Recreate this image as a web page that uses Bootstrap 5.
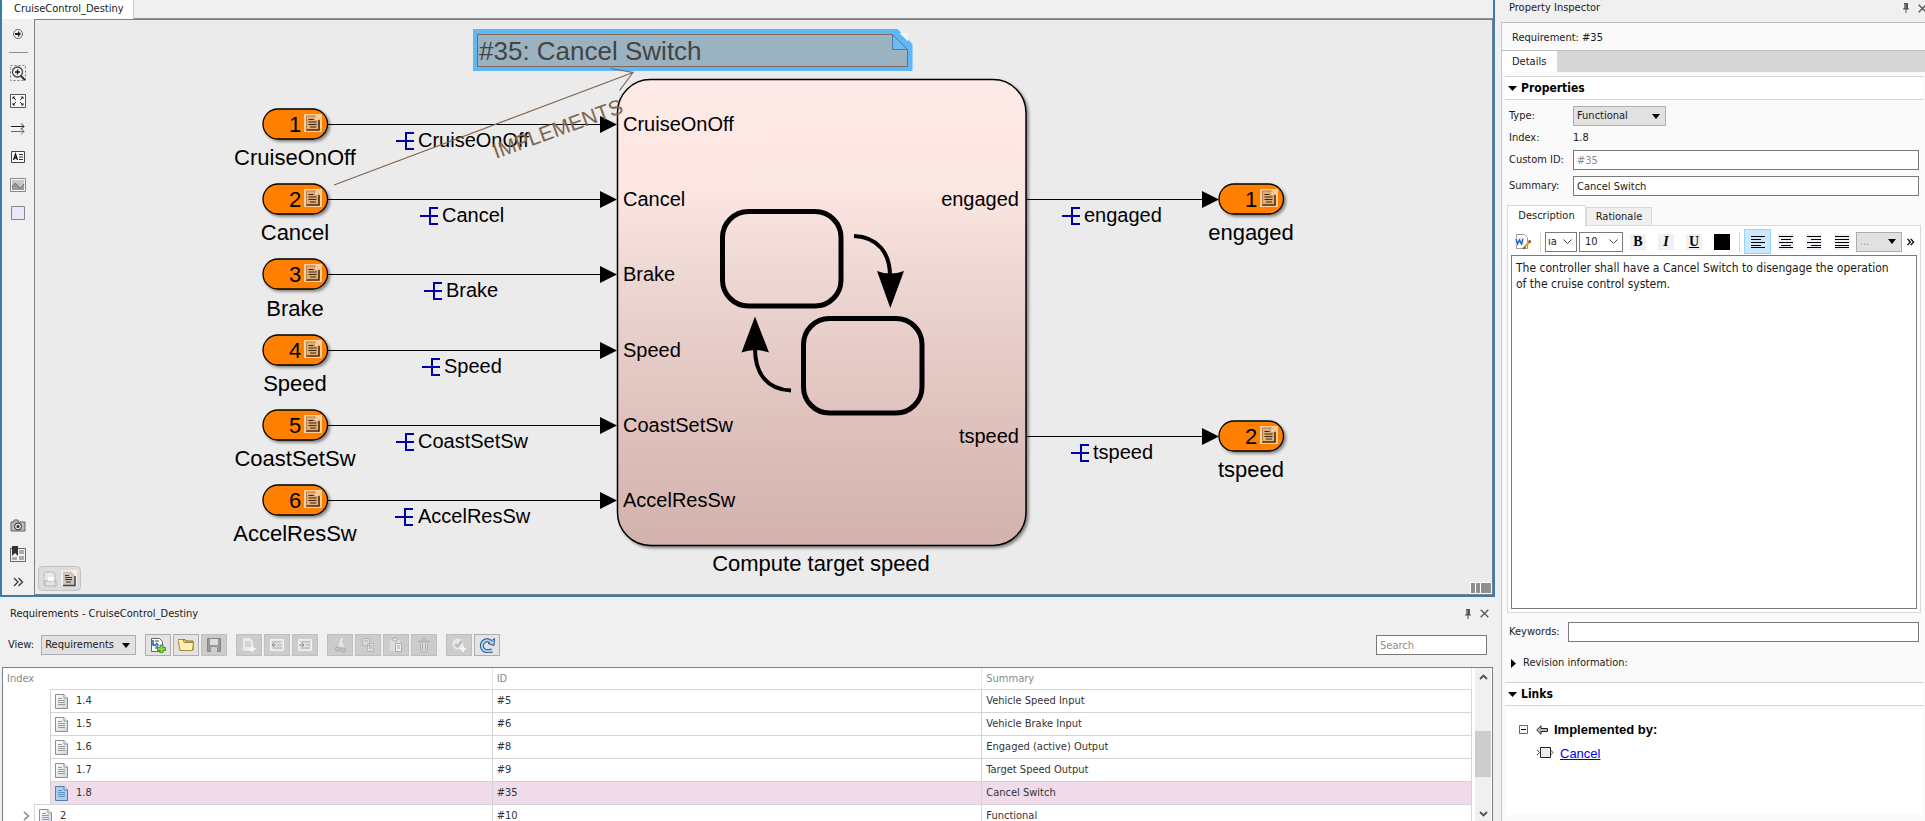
<!DOCTYPE html>
<html lang="en">
<head>
<meta charset="utf-8">
<meta name="viewport" content="width=device-width, initial-scale=1">
<title>CruiseControl_Destiny</title>
<link href="https://cdn.jsdelivr.net/npm/bootstrap@5.3.0/dist/css/bootstrap.min.css" rel="stylesheet">
<style>
  body { font: 11px/16px "DejaVu Sans Condensed", "Noto Sans", sans-serif; color: #1a1a1a; background: #f0f0f0; }
  svg { display: block; flex: none; }
  .app { height: 100vh; min-height: 600px; }
  .workspace { min-width: 0; margin-right: 6px; }

  /* model editor */
  .editor { border: 2px solid #3a7cb0; border-top: 0; min-height: 0; }
  .editor-body { min-height: 0; }
  .doc-tabs { height: 19px; }
  .doc-tab { background: #fff; border-right: 1px solid #ccc; width: 132px; padding: 0 0 1px 12px; color: #1a1a1a; text-decoration: none; }
  .doc-rest { border-bottom: 1px solid #8d8f94; }
  .palette { width: 32px; padding: 7px 0 5px; gap: 12px; }
  .palette .btn, .flat { padding: 0; border: 0; border-radius: 0; line-height: 1; }
  .palette hr { width: 19px; margin: 0; color: #8f8f8f; opacity: 1; }
  .palette .first-tool { gap: 10px; }
  .canvas { background: #ebebeb; border: 1px solid #7c8087; min-width: 0; }
  .canvas svg { width: 100%; height: 100%; font-family: "Liberation Sans", Arial, sans-serif; }

  /* requirements browser */
  .dock { height: 224px; flex: none; }
  .dock-title { height: 32px; flex: none; padding: 1px 6px 0 10px; }
  .dock-tools { height: 32px; flex: none; padding: 0 8px; gap: 9px; }
  .view-pick { gap: 7px; }
  .tool-group { gap: 2px; }
  .tool { width: 26px; height: 22px; padding: 0; border: 1px solid #adadad; border-radius: 0; background: #e3e3e3; display: flex; align-items: center; justify-content: center; }
  .tool:disabled { background: #cccccc; border-color: #bfbfbf; opacity: 1; }
  .pick { height: 20px; padding: 0 20px 0 3px; border: 1px solid #adadad; border-radius: 0; font-size: 11px; line-height: 18px; color: #1a1a1a; background: #e1e1e1 url("data:image/svg+xml,%3Csvg xmlns='http://www.w3.org/2000/svg' viewBox='0 0 8 5'%3E%3Cpath d='M0 0h8L4 5z'/%3E%3C/svg%3E") no-repeat right 5px center / 8px 5px; }
  .pick-view { width: 95px; }
  .pick-type { width: 93px; }
  .pick-gray { width: 46px; color: #999; margin-left: 6px; }
  .pick-open { background: #fff url("data:image/svg+xml,%3Csvg xmlns='http://www.w3.org/2000/svg' viewBox='0 0 9 6'%3E%3Cpath d='M.5 .5l4 4 4-4' fill='none' stroke='%23444'/%3E%3C/svg%3E") no-repeat right 4px center / 9px 6px; border-color: #7a7a7a; padding-left: 2px; padding-right: 12px; }
  .pick-font { width: 32px; }
  .pick-size { width: 44px; padding-left: 5px; margin-left: 2px; }
  .field { height: 20px; border: 1px solid #7a7a7a; border-radius: 0; padding: 0 3px; font-size: 11px; line-height: 18px; color: #1a1a1a; }
  .field::placeholder { color: #8c8c8c; }
  .field-search { width: 111px; }

  .grid-frame { flex: 1 1 0; border: 1px solid #7c8087; border-bottom: 0; margin: 6px 2px 0; background: #fff; min-height: 0; }
  .req-table { table-layout: fixed; width: 100%; border-collapse: separate; border-spacing: 0; color: #333; }
  .req-table th { font-weight: normal; color: #8a8a8a; height: 21px; padding: 0 4px; border-right: 1px solid #e6e6e6; }
  .req-table td { height: 23px; padding: 0 4px; border-top: 1px solid #d4d4d4; border-right: 1px solid #d4d4d4; }
  .req-table td.tree { padding: 0; border-top: 0; }
  .leaf { height: 23px; margin-left: 47px; border: solid #d4d4d4; border-width: 1px 0 0 1px; padding-left: 4px; gap: 8px; }
  .branch { margin-left: 0; }
  .twisty { width: 31px; padding-left: 20px; }
  .picked td:not(.tree), .picked .leaf { background: #efdbea; }
  .scroller { width: 20px; flex: none; padding: 0 1px 0 3px; }
  .track { background: #f0f0f0; padding: 6px 0 4px; }
  .thumb { height: 46px; margin-top: 51px; background: #cdcdcd; }

  /* property inspector */
  .inspector { width: 424px; flex: none; }
  .inspector-title { height: 22px; padding: 0 0 6px 8px; }
  .inspector-body { background: #fafafa; border-left: 1px solid #c8c8c8; min-height: 0; }
  .subject { height: 29px; border: solid #bdbdbd; border-width: 1px 0; padding: 2px 0 0 10px; }
  .detail-tabs { height: 21px; background: #d6d6d6; }
  .detail-tab { background: #fff; width: 55px; padding: 3px 0 0 10px; color: #1a1a1a; text-decoration: none; }
  .section-head { height: 24px; flex: none; margin: 0 1px 0 3px; border: solid #d4d4d4; border-width: 1px 0; background: #fff; padding-left: 3px; gap: 4px; font-size: 12px; font-weight: bold; color: #000; }
  .props { padding: 6px 6px 8px 7px; }
  .props .line { height: 20px; }
  .props .line + .line { margin-top: 2px; }
  .props .line + .line.spaced { margin-top: 6px; }
  .props .line label, .props .cap { width: 64px; }
  .extras { padding: 9px 6px 11px 7px; }
  .extras .revision { padding: 13px 0 0 2px; gap: 7px; }
  .text-tabs { padding-left: 5px; height: 21px; }
  .text-tab { padding: 0; border: 1px solid #d9d9d9; border-bottom: 0; border-radius: 0; background: #f0f0f0; font-size: 11px; line-height: 16px; width: 66px; height: 18px; color: #1a1a1a; }
  .text-tab.open { width: 79px; height: 21px; background: #fff; position: relative; z-index: 1; margin-bottom: -1px; }
  .pane { margin: 0 4px 0 5px; border: 1px solid #d9d9d9; background: #fff; padding: 2px 3px 3px; min-height: 0; }
  .format { height: 27px; padding-left: 4px; }
  .glyph { width: 16px; height: 16px; padding: 0; border: 0; border-radius: 0; background: #f0f0f7; margin-left: 12px; color: #000; font: bold 14px/16px "Liberation Serif", serif; }
  .glyph-on { width: 27px; height: 25px; background: #cce8ff; border: 1px solid #99d1ff; margin-left: 4px; display: flex; align-items: center; justify-content: center; }
  .glyph-on + .glyph, .pick-size + .glyph { margin-left: 7px; }
  .swatch { background: #000; }
  .rule { width: 1px; height: 20px; background: #d4d4d4; margin-left: 9px; }
  .prose { border: 1px solid #7a7a7a; border-radius: 0; resize: none; font-size: 12px; line-height: 16px; padding: 4px 20px 4px 4px; color: #1a1a1a; min-height: 0; }
  .links { height: 105px; flex: none; margin: 4px 3px 6px 5px; background: #fff; padding: 12px 0 0 12px; font: 13px/16px "Liberation Sans", Arial, sans-serif; color: #000; }
  .links a { color: #0000ee; text-decoration: underline; }
  .link-kind { gap: 6px; }
  .link-item { padding-left: 18px; gap: 6px; }
</style>
</head>
<body class="overflow-hidden">

<svg width="0" height="0" class="position-absolute" aria-hidden="true">
  <defs>
    <linearGradient id="chartFill" x1="0" y1="0" x2="0" y2="1">
      <stop offset="0" stop-color="#fde9e6"/><stop offset=".22" stop-color="#fce7e4"/>
      <stop offset=".4" stop-color="#efd9d4"/><stop offset=".62" stop-color="#e4c9c5"/><stop offset="1" stop-color="#d3b1ac"/>
    </linearGradient>
    <linearGradient id="paper" x1="0" y1="0" x2="1" y2="1"><stop offset="0" stop-color="#fff"/><stop offset="1" stop-color="#cfd4da"/></linearGradient>
    <filter id="shade" x="-10%" y="-10%" width="125%" height="130%"><feDropShadow dx="2" dy="2" stdDeviation="1.5" flood-color="#000" flood-opacity=".45"/></filter>
    <symbol id="badge" viewBox="0 0 18 18">
      <path d="M0 0h18v18H0z" fill="#ffcf98"/>
      <path d="M2 1.500h9l4.500 4v11H2z" fill="#e0ae78"/>
      <path d="M2 16h13V6" fill="none" stroke="#4b2b12" stroke-width="1.600"/>
      <path d="M2.500 16V2H11" fill="none" stroke="#b98252"/>
      <path d="M11 1.500V6h4.500z" fill="#fff0df" stroke="#b98252" stroke-width=".6"/>
      <path d="M4.500 5.500h5M4.500 8h8M4.500 10.500h8M6 13h6" stroke="#3c2208" stroke-width="1.200"/>
    </symbol>
    <symbol id="port" viewBox="0 0 72 38" overflow="visible">
      <rect x="1" y="1" width="64.500" height="30" rx="15" fill="#ff8000" stroke="#000" stroke-width="1.300" filter="url(#shade)"/>
      <use href="#badge" x="42" y="6" width="18" height="18"/>
    </symbol>
    <symbol id="prong" viewBox="0 0 18 18"><path d="M0 9h18M18 1h-8v16h8" fill="none" stroke="#0000a8" stroke-width="2"/></symbol>
    <symbol id="page" viewBox="0 0 13 15"><path d="M.5.500h8.500l3.500 3.500v10.500H.5z" fill="url(#paper)" stroke="#8b8f93"/><path d="M9 .5V4h3.500" fill="#fff" stroke="#8b8f93"/><path d="M3 4.500h4M3 6.500h7M3 8.500h7M3 10.500h7" stroke="#8e9296" stroke-width=".9"/></symbol>
    <symbol id="pin" viewBox="0 0 8 12"><path d="M2 1h4v6H2z" fill="#555"/><path d="M3 2v4" stroke="#aaa"/><path d="M1 7h6" stroke="#555"/><path d="M4 7v4" stroke="#555"/></symbol>
    <symbol id="cross" viewBox="0 0 9 9"><path d="M.7.700l7.600 7.600M8.300.700L.7 8.300" stroke="#555" stroke-width="1.300"/></symbol>
    <symbol id="more" viewBox="0 0 9 10"><path d="M.8 1l3.500 4-3.500 4M4.800 1l3.500 4-3.500 4" fill="none" stroke="currentColor" stroke-width="1.600"/></symbol>
    <symbol id="open" viewBox="0 0 9 5"><path d="M0 0h9L4.500 5z"/></symbol>
  </defs>
</svg>

<div class="app d-flex">
  <main class="workspace d-flex flex-column flex-grow-1">

    <section class="editor d-flex flex-column flex-grow-1">
      <div class="doc-tabs d-flex">
        <a href="#" class="doc-tab d-flex align-items-center">CruiseControl_Destiny</a>
        <div class="doc-rest flex-grow-1"></div>
      </div>
      <div class="editor-body d-flex flex-grow-1">
        <nav class="palette d-flex flex-column align-items-center" aria-label="Palette">
          <div class="first-tool d-flex flex-column align-items-center">
            <button class="btn" aria-label="Hide browser"><svg width="16" height="16"><circle cx="8" cy="8" r="4.500" fill="#eee" stroke="#666"/><path d="M5 8h3" stroke="#222" stroke-width="2"/><path d="M8 5l3 3-3 3z" fill="#222"/></svg></button>
            <hr>
          </div>
          <button class="btn" aria-label="Zoom"><svg width="16" height="16"><path d="M.5.500h15v15H.5z" fill="none" stroke="#777" stroke-dasharray="2 2"/><circle cx="7.500" cy="7" r="5" fill="#f6f6f6" stroke="#444" stroke-width="1.300"/><path d="M5 7h5M7.500 4.500v5" stroke="#111" stroke-width="1.300"/><path d="M11 11l4 4" stroke="#333" stroke-width="2"/></svg></button>
          <button class="btn" aria-label="Fit to view"><svg width="16" height="16"><path d="M.5 1.500h15v13H.5z" fill="#fafafa" stroke="#555"/><path d="M3 6V4h2M3 4l3 3M13 6V4h-2M13 4l-3 3M3 10v2h2M3 12l3-3M13 10v2h-2M13 12l-3-3" fill="none" stroke="#222"/></svg></button>
          <button class="btn" aria-label="Sample time"><svg width="16" height="16"><path d="M1 5.500h13M11 2.500l3 3-3 3" fill="none" stroke="#222"/><path d="M1 10.500h13M11 7.500l3 3-3 3" fill="none" stroke="#666"/></svg></button>
          <button class="btn" aria-label="Annotation"><svg width="16" height="16"><path d="M1.500 2.500h13v11h-13z" fill="#fafafa" stroke="#444"/><path d="M3.500 11l2-6 2 6M4 9h3" fill="none" stroke="#111" stroke-width="1.300"/><path d="M9 5.500h4M9 8h4M9 10.500h4" stroke="#333"/></svg></button>
          <button class="btn" aria-label="Image"><svg width="16" height="16"><path d="M.5 1.500h15v13H.5z" fill="#f6f6f6" stroke="#888"/><path d="M2 3h12v10H2z" fill="#c6c6c6"/><path d="M2 10c3-5 4-4 6-1s3 2 6-2v6H2z" fill="#9a9a9a"/><path d="M2 10c3-5 4-4 6-1s3 2 6-2" fill="none" stroke="#666"/></svg></button>
          <button class="btn" aria-label="Area"><svg width="16" height="16"><path d="M1.500 1.500h13v13h-13z" fill="#e8e8fa" stroke="#888"/></svg></button>
          <div class="flex-grow-1"></div>
          <button class="btn" aria-label="Screenshot"><svg width="16" height="16"><path d="M1 4h3V2h4v2h7v9H1z" fill="#bbb" stroke="#666"/><circle cx="8" cy="8.500" r="3.500" fill="#ddd" stroke="#333"/><circle cx="8" cy="8.500" r="1.500" fill="#333"/></svg></button>
          <button class="btn" aria-label="Bookmarks"><svg width="16" height="16"><path d="M.5 2.500h15v13H.5z" fill="#f4f4f4" stroke="#666"/><path d="M2 0h6v10L5 7l-3 3z" fill="#333"/><path d="M9 4h5v4H9zM9 10h5v4H9zM2 11h5v3H2z" fill="#aaa"/></svg></button>
          <button class="btn" aria-label="More"><svg width="16" height="16"><path d="M4 4l4 4-4 4M8.500 4l4 4-4 4" fill="none" stroke="#333" stroke-width="1.200"/></svg></button>
        </nav>

        <div class="canvas flex-grow-1 overflow-hidden">
          <svg viewBox="35 20 1457 574" preserveAspectRatio="xMinYMin meet" font-size="20" role="img" aria-label="Model diagram">
            <!-- chart block -->
            <rect x="617.500" y="79.500" width="408.500" height="466" rx="33" fill="url(#chartFill)" stroke="#000" stroke-width="1.500" filter="url(#shade)"/>
            <g fill="none" stroke="#000" stroke-width="5">
              <rect x="722.500" y="211.500" width="118.500" height="94.500" rx="26"/>
              <rect x="803.500" y="318.500" width="118.500" height="94.500" rx="26"/>
              <path d="M854 236c24 1 36 17 36 40M791 390.500c-24-1-36-17-36-42" stroke-width="4"/>
            </g>
            <path d="M877 271q13 5 27 0l-13.700 37zM741.500 352.500q13-5 27.500 0L755 316.500z"/>

            <!-- signal lines -->
            <path d="M328 124.500h275M328 199.500h275M328 274.500h275M328 350.500h275M328 425.500h275M328 500.500h275M1026 199.500h178M1026 436.500h178" stroke="#000"/>
            <path d="M600 116l17 8.500-17 8.500zM600 191l17 8.500-17 8.500zM600 266l17 8.500-17 8.500zM600 342l17 8.500-17 8.500zM600 417l17 8.500-17 8.500zM600 492l17 8.500-17 8.500zM1202 191l17 8.500-17 8.500zM1202 428l17 8.500-17 8.500z"/>

            <!-- ports -->
            <g>
              <use href="#port" x="262" y="108" width="72" height="38"/><use href="#port" x="262" y="183" width="72" height="38"/>
              <use href="#port" x="262" y="258" width="72" height="38"/><use href="#port" x="262" y="334" width="72" height="38"/>
              <use href="#port" x="262" y="409" width="72" height="38"/><use href="#port" x="262" y="484" width="72" height="38"/>
              <use href="#port" x="1218" y="183" width="72" height="38"/><use href="#port" x="1218" y="420" width="72" height="38"/>
            </g>
            <g text-anchor="middle" font-size="22">
              <text x="295" y="132">1</text><text x="295" y="207">2</text><text x="295" y="282">3</text><text x="295" y="358">4</text><text x="295" y="433">5</text><text x="295" y="508">6</text>
              <text x="1251" y="207">1</text><text x="1251" y="444">2</text>
            </g>
            <g text-anchor="middle" font-size="22">
              <text x="295" y="165">CruiseOnOff</text><text x="295" y="240">Cancel</text><text x="295" y="316">Brake</text><text x="295" y="391">Speed</text><text x="295" y="466">CoastSetSw</text><text x="295" y="541">AccelResSw</text>
              <text x="1251" y="240">engaged</text><text x="1251" y="477">tspeed</text><text x="821" y="571">Compute target speed</text>
            </g>

            <!-- labels inside the chart -->
            <text x="623" y="131">CruiseOnOff</text><text x="623" y="206">Cancel</text><text x="623" y="281">Brake</text><text x="623" y="357">Speed</text><text x="623" y="432">CoastSetSw</text><text x="623" y="507">AccelResSw</text>
            <text x="1019" y="206" text-anchor="end">engaged</text><text x="1019" y="443" text-anchor="end">tspeed</text>

            <!-- signal names -->
            <use href="#prong" x="396" y="132" width="18" height="18"/><text x="418" y="147">CruiseOnOff</text>
            <use href="#prong" x="420" y="207" width="18" height="18"/><text x="442" y="222">Cancel</text>
            <use href="#prong" x="424" y="282" width="18" height="18"/><text x="446" y="297">Brake</text>
            <use href="#prong" x="422" y="358" width="18" height="18"/><text x="444" y="373">Speed</text>
            <use href="#prong" x="396" y="433" width="18" height="18"/><text x="418" y="448">CoastSetSw</text>
            <use href="#prong" x="395" y="508" width="18" height="18"/><text x="418" y="523">AccelResSw</text>
            <use href="#prong" x="1062" y="207" width="18" height="18"/><text x="1084" y="222">engaged</text>
            <use href="#prong" x="1071" y="444" width="18" height="18"/><text x="1093" y="459">tspeed</text>

            <!-- requirement note and its link -->
            <path d="M473 29h424.500L912.500 44v27H473z" fill="#5fb8f6"/>
            <path d="M477.500 34.500h415l15 15v17h-430z" fill="#9bb2c0" stroke="#7b6a5a"/>
            <path d="M892.500 34.500l15 15h-15z" fill="#6cbcf3" stroke="#4a7ba5"/>
            <path d="M899.500 33h8.500v8.500z" fill="#f6f6f6"/>
            <text x="479" y="60" font-size="26" fill="#444">#35: Cancel Switch</text>
            <path d="M334 185L633 72.500M610.500 68.500L633 72.500 619.500 90.500" fill="none" stroke="#80664e" stroke-width="1.200"/>
            <text transform="translate(496 159) rotate(-20)" font-size="21" fill="#80664e">IMPLEMENTS</text>

            <!-- canvas corners -->
            <rect x="38.500" y="566.500" width="42" height="24" rx="4" fill="#dcdcdc" stroke="#c2c2c2"/>
            <path d="M44 575q0-3 3-3h5q3 0 3 3v10H44z" fill="#e8e8e8" stroke="#bbb"/><path d="M45 581h11v5H45z" fill="#dce4ea" stroke="#a5b0b8"/><path d="M48 577h6v4h-6z" fill="#fff"/>
            <path d="M61 570h16v16H61z" fill="#f2eeea"/><path d="M63 571.500h8l4 4v10H63z" fill="#cfc4ba"/><path d="M63 585.500h12V576" fill="none" stroke="#444" stroke-width="1.500"/><path d="M65 575.500h4M65 577.500h7M65 579.500h7M66 582h5" stroke="#333"/>
            <path d="M1470 582h22v12h-22z" fill="#fff"/><path d="M1471 583h4v10h-4zM1476 583h4v10h-4zM1481 583h10v10h-10z" fill="#8f8f8f"/>
          </svg>
        </div>
      </div>
    </section>

    <section class="dock d-flex flex-column overflow-hidden">
      <div class="dock-title d-flex align-items-center">
        <span class="flex-grow-1">Requirements - CruiseControl_Destiny</span>
        <button class="btn flat me-2" aria-label="Pin"><svg width="8" height="12"><use href="#pin"/></svg></button>
        <button class="btn flat" aria-label="Close"><svg width="9" height="9"><use href="#cross"/></svg></button>
      </div>
      <div class="dock-tools d-flex align-items-center">
        <div class="view-pick d-flex align-items-center">
          <label for="view">View:</label>
          <select id="view" class="form-select pick pick-view"><option>Requirements</option></select>
        </div>
        <div class="tool-group d-flex">
          <button class="tool" aria-label="New requirement set"><svg width="16" height="16"><path d="M1.500 1.500h8l3 3v10h-11z" fill="#fff" stroke="#666"/><path d="M3 3v5h3M6 6l2 2-2 2" fill="none" stroke="#17629a" stroke-width="1.500"/><path d="M5 4h4M5 11h3" stroke="#444"/><path d="M10 8h3v2.500h2.500v3H13V16h-3v-2.500H7.500v-3H10z" fill="#8ed24c" stroke="#2f7d1e" stroke-width=".8"/></svg></button>
          <button class="tool" aria-label="Open"><svg width="16" height="16"><path d="M1 2.500h6l1 1.500h7v9H2z" fill="#e9c766" stroke="#8a6d1d"/><path d="M0 2.500h5l1 3h9.500l-1 8H2z" fill="#fff0b8" stroke="#a8882f"/></svg></button>
          <button class="tool" aria-label="Save" disabled><svg width="16" height="16"><path d="M1.500 1.500h13v13h-13z" fill="#999" stroke="#858585"/><path d="M4 2h8v6H4z" fill="#ddd"/><path d="M5 10h6v5H5z" fill="#ccc"/></svg></button>
        </div>
        <div class="tool-group d-flex">
          <button class="tool" aria-label="Add requirement" disabled><svg width="16" height="16"><path d="M2 1h7l3 3v10H2z" fill="#e9e9e9"/><path d="M4 5h5M4 7h6M4 9h6" stroke="#bbb"/><path d="M11.500 9v6M8.500 12h6" stroke="#f6f6f6" stroke-width="2"/></svg></button>
          <button class="tool" aria-label="Promote" disabled><svg width="16" height="16"><path d="M1.500 2.500h13v11h-13z" fill="#e4e4e4" stroke="#f2f2f2"/><path d="M3 5h9M8 8h5M4 11h9" stroke="#aaa"/><path d="M7 8H3l2-2M3 8l2 2" fill="none" stroke="#888"/></svg></button>
          <button class="tool" aria-label="Demote" disabled><svg width="16" height="16"><path d="M1.500 2.500h13v11h-13z" fill="#e4e4e4" stroke="#f2f2f2"/><path d="M4 5h9M9 8h4M4 11h9" stroke="#aaa"/><path d="M2 8h5L5 6M7 8l-2 2" fill="none" stroke="#888"/></svg></button>
        </div>
        <div class="tool-group d-flex">
          <button class="tool" aria-label="Cut" disabled><svg width="16" height="16"><path d="M10 1L7 10M9 6l3 5" stroke="#eee" stroke-width="1.500"/><circle cx="5.500" cy="12" r="2" fill="none" stroke="#b0b0b0" stroke-width="1.400"/><circle cx="11.500" cy="13" r="2" fill="none" stroke="#b0b0b0" stroke-width="1.400"/></svg></button>
          <button class="tool" aria-label="Copy" disabled><svg width="16" height="16"><path d="M2.500 1.500h7v7h-7zM7.500 6.500h6v8h-6z" fill="#ddd" stroke="#b5b5b5"/><path d="M4 4h4M9 9h3M9 11h3" stroke="#aaa"/></svg></button>
          <button class="tool" aria-label="Paste" disabled><svg width="16" height="16"><path d="M2 3h10v11H2z" fill="#ddd"/><path d="M5 1h4v3H5z" fill="#eee" stroke="#aaa"/><path d="M7.500 6.500h6v8h-6z" fill="#f0f0f0" stroke="#aaa"/><path d="M9 9h3M9 11h3" stroke="#aaa"/></svg></button>
          <button class="tool" aria-label="Delete" disabled><svg width="16" height="16"><path d="M4 5h8l-1 10H5z" fill="#ddd" stroke="#b0b0b0"/><path d="M2.500 4h11M6 2h4M6.500 6.500v7M9.500 6.500v7" stroke="#aaa"/></svg></button>
        </div>
        <div class="tool-group d-flex">
          <button class="tool" aria-label="Verify" disabled><svg width="16" height="16"><circle cx="7" cy="7" r="5.500" fill="#e8e8e8"/><path d="M4 7l2.500 2.500L11 4" fill="none" stroke="#b5b5b5" stroke-width="2"/><path d="M12 9v6M9 12h6" stroke="#f4f4f4" stroke-width="2"/></svg></button>
          <button class="tool" aria-label="Refresh"><svg width="16" height="16"><path d="M13 13.500C6 16 2 12 3 7.500 4 3 9 2 12 5" fill="none" stroke="#235488" stroke-width="4"/><path d="M15.500 1.500l-.5 7-6-2z" fill="#a9d2f2" stroke="#235488"/><path d="M13 13.500C6 16 2 12 3 7.500 4 3 9 2 12 5" fill="none" stroke="#a9d2f2" stroke-width="2"/></svg></button>
        </div>
        <input type="search" class="form-control field field-search ms-auto" placeholder="Search" aria-label="Search">
      </div>

      <div class="grid-frame d-flex overflow-hidden">
        <div class="flex-grow-1 overflow-hidden">
          <table class="req-table">
            <thead><tr><th>Index</th><th>ID</th><th>Summary</th></tr></thead>
            <tbody>
              <tr><td class="tree"><div class="leaf d-flex align-items-center"><svg width="13" height="15"><use href="#page"/></svg>1.4</div></td><td>#5</td><td>Vehicle Speed Input</td></tr>
              <tr><td class="tree"><div class="leaf d-flex align-items-center"><svg width="13" height="15"><use href="#page"/></svg>1.5</div></td><td>#6</td><td>Vehicle Brake Input</td></tr>
              <tr><td class="tree"><div class="leaf d-flex align-items-center"><svg width="13" height="15"><use href="#page"/></svg>1.6</div></td><td>#8</td><td>Engaged (active) Output</td></tr>
              <tr><td class="tree"><div class="leaf d-flex align-items-center"><svg width="13" height="15"><use href="#page"/></svg>1.7</div></td><td>#9</td><td>Target Speed Output</td></tr>
              <tr class="picked"><td class="tree"><div class="leaf d-flex align-items-center"><svg width="13" height="15"><path d="M.5.500h8.500l3.500 3.500v10.500H.5z" fill="#a9d0ee" stroke="#4d7fa8"/><path d="M9 .5V4h3.500" fill="#d8ecfa" stroke="#4d7fa8"/><path d="M3 4.500h4M3 6.500h7M3 8.500h7M3 10.500h7" stroke="#5b8bb2" stroke-width=".9"/></svg>1.8</div></td><td>#35</td><td>Cancel Switch</td></tr>
              <tr><td class="tree"><div class="d-flex"><span class="twisty d-flex align-items-center"><svg width="7" height="10"><path d="M1 1l4.500 4L1 9" fill="none" stroke="#999" stroke-width="1.800"/></svg></span><div class="leaf branch d-flex align-items-center flex-grow-1"><svg width="13" height="15"><use href="#page"/></svg>2</div></div></td><td>#10</td><td>Functional</td></tr>
            </tbody>
          </table>
        </div>
        <div class="scroller d-flex">
          <div class="track d-flex flex-column align-items-center flex-grow-1">
            <svg width="9" height="6"><path d="M1 5l3.500-3.500L8 5" fill="none" stroke="#505050" stroke-width="1.800"/></svg>
            <div class="thumb w-100"></div>
            <svg class="mt-auto" width="9" height="6"><path d="M1 1l3.500 3.500L8 1" fill="none" stroke="#505050" stroke-width="1.800"/></svg>
          </div>
        </div>
      </div>
    </section>
  </main>

  <aside class="inspector d-flex flex-column">
    <div class="inspector-title d-flex align-items-center">
      <span class="flex-grow-1">Property Inspector</span>
      <button class="btn flat me-2" aria-label="Pin"><svg width="8" height="12"><use href="#pin"/></svg></button>
      <button class="btn flat" aria-label="Close"><svg width="7" height="9" viewBox="0 0 7 9"><use href="#cross" width="9" height="9"/></svg></button>
    </div>
    <div class="inspector-body d-flex flex-column flex-grow-1">
      <div class="subject d-flex align-items-center">Requirement: #35</div>
      <div class="detail-tabs d-flex mb-1"><a href="#" class="detail-tab">Details</a></div>
      <h2 class="section-head d-flex align-items-center mb-0"><svg width="9" height="5"><use href="#open"/></svg>Properties</h2>
      <div class="props">
        <div class="line d-flex align-items-center"><label for="type">Type:</label><select id="type" class="form-select pick pick-type"><option>Functional</option></select></div>
        <div class="line d-flex align-items-center"><span class="cap">Index:</span><span>1.8</span></div>
        <div class="line d-flex align-items-center"><label for="cid">Custom ID:</label><input id="cid" class="form-control field flex-grow-1 w-auto" placeholder="#35"></div>
        <div class="line spaced d-flex align-items-center"><label for="sum">Summary:</label><input id="sum" class="form-control field flex-grow-1 w-auto" value="Cancel Switch"></div>
      </div>
      <div class="text-tabs d-flex align-items-end">
        <button class="text-tab open">Description</button><button class="text-tab">Rationale</button>
      </div>
      <div class="pane d-flex flex-column flex-grow-1">
        <div class="format d-flex align-items-center">
          <button class="btn flat" aria-label="Edit in Word"><svg width="16" height="16"><path d="M1.500.500h8l3 3v11h-11z" fill="#fff" stroke="#999"/><path d="M0 4h9v7H0z" fill="#dbe9f8"/><path d="M1 5l1.500 5L4.500 6l2 4L8 5" fill="none" stroke="#1c5fb0" stroke-width="1.300"/><path d="M15 7l-6 7" stroke="#e0a030" stroke-width="2.500"/><path d="M15.500 6.500l-1.500 2" stroke="#b33" stroke-width="2.500"/><path d="M9 12.500l-1 3 2.500-1.500z" fill="#333"/></svg></button>
          <span class="rule"></span>
          <select class="form-select pick pick-open pick-font ms-1" aria-label="Font"><option>ıa</option></select>
          <select class="form-select pick pick-open pick-size" aria-label="Size"><option>10</option></select>
          <button class="glyph">B</button>
          <button class="glyph fst-italic">I</button>
          <button class="glyph text-decoration-underline">U</button>
          <button class="glyph swatch" aria-label="Text colour"></button>
          <span class="rule"></span>
          <button class="glyph glyph-on" aria-label="Align left"><svg width="16" height="16"><path d="M1 2.500h14M1 5.500h10M1 8.500h14M1 11.500h10M1 13.500h14" stroke="#000"/></svg></button>
          <button class="glyph" aria-label="Align centre"><svg width="16" height="16"><path d="M1 2.500h14M3 5.500h10M1 8.500h14M3 11.500h10M1 13.500h14" stroke="#000"/></svg></button>
          <button class="glyph" aria-label="Align right"><svg width="16" height="16"><path d="M1 2.500h14M5 5.500h10M1 8.500h14M5 11.500h10M1 13.500h14" stroke="#000"/></svg></button>
          <button class="glyph" aria-label="Justify"><svg width="16" height="16"><path d="M1 2.500h14M1 5.500h14M1 8.500h14M1 11.500h14M1 13.500h14" stroke="#000"/></svg></button>
          <select class="form-select pick pick-gray" aria-label="List"><option>...</option></select>
          <button class="btn flat ms-1 text-black" aria-label="More"><svg width="9" height="8"><use href="#more"/></svg></button>
        </div>
        <textarea class="form-control prose flex-grow-1" aria-label="Description text">The controller shall have a Cancel Switch to disengage the operation of the cruise control system.</textarea>
      </div>
      <div class="extras">
        <div class="d-flex align-items-center gap-2"><label for="key">Keywords:</label><input id="key" class="form-control field flex-grow-1 w-auto"></div>
        <div class="revision d-flex align-items-center"><svg width="5" height="9"><path d="M0 0v9l5-4.500z"/></svg>Revision information:</div>
      </div>
      <h2 class="section-head d-flex align-items-center mb-0"><svg width="9" height="5"><use href="#open"/></svg>Links</h2>
      <div class="links">
        <div class="link-kind d-flex align-items-center fw-bold mb-2"><svg width="11" height="11"><path d="M.5.500h8v8h-8z" fill="#fff" stroke="#666"/><path d="M2 4.500h5" stroke="#000"/></svg><svg width="12" height="10"><path d="M.7 5L5 .8V3.500h6.500v3H5v2.700z" fill="#bbb" stroke="#222"/></svg>Implemented by:</div>
        <div class="link-item d-flex align-items-center"><svg width="17" height="15"><path d="M3.500.500h10v10h-10z" fill="#eee" stroke="#222"/><path d="M0 3l2.500 2.500L0 8M13.500 3l2.500 2.500L13.500 8" fill="none" stroke="#444"/></svg><a href="#">Cancel</a></div>
      </div>
    </div>
  </aside>
</div>
<script src="https://cdn.jsdelivr.net/npm/bootstrap@5.3.0/dist/js/bootstrap.bundle.min.js"></script>
</body>
</html>
